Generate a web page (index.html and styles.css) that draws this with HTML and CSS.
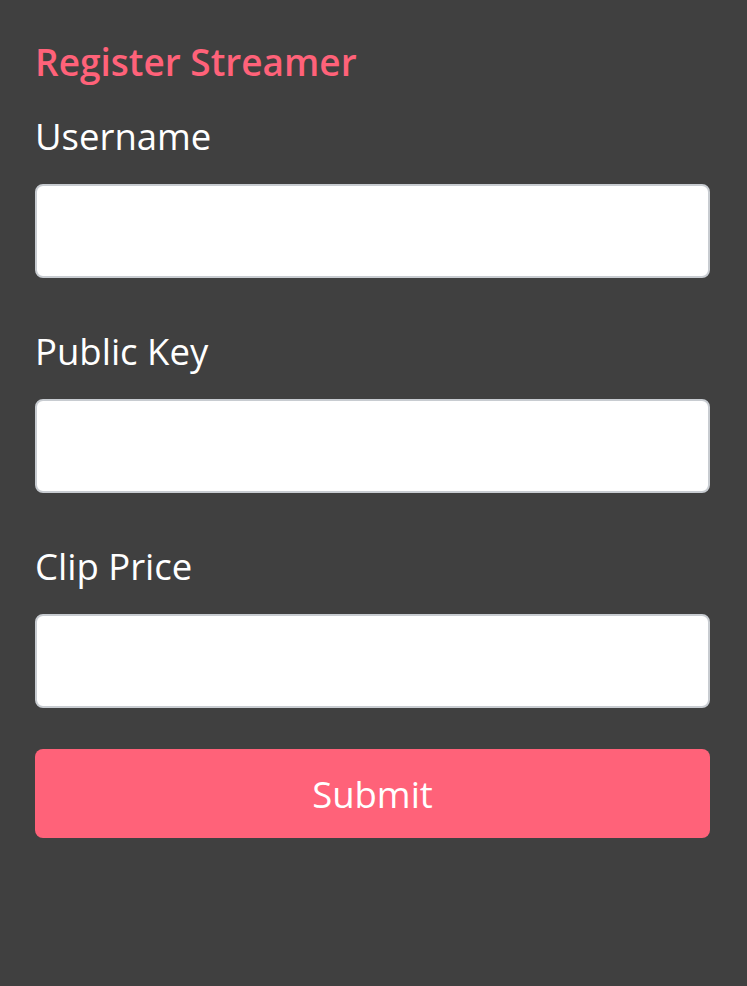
FILE: index.html
```html
<!DOCTYPE html>
<html>
<head>
<meta charset="utf-8">
<link rel="stylesheet" href="styles.css">
</head>
<body>
<form class="form">
  <h1 class="title">Register Streamer</h1>
  <label class="field">
    <span class="label">Username</span>
    <input class="input" type="text">
  </label>
  <label class="field">
    <span class="label">Public Key</span>
    <input class="input" type="text">
  </label>
  <label class="field">
    <span class="label">Clip Price</span>
    <input class="input" type="text">
  </label>
  <button class="submit" type="button">Submit</button>
</form>
</body>
</html>
```
FILE: styles.css
```css
html, body {
  margin: 0;
  padding: 0;
  background: #404040;
  height: 100%;
}
body {
  font-family: "Open Sans", "Noto Sans", sans-serif;
  color: #ffffff;
}
.form {
  display: flex;
  flex-direction: column;
  padding: 37px 37px 0 35px;
}
.title {
  margin: 0;
  font-size: 37px;
  font-weight: 600;
  line-height: 50px;
  color: #ff6279;
}
.field {
  display: flex;
  flex-direction: column;
  margin-top: 24px;
}
.field + .field {
  margin-top: 48px;
}
.label {
  font-size: 36.5px;
  line-height: 50px;
  margin-bottom: 23px;
}
.input {
  box-sizing: border-box;
  height: 94px;
  width: 100%;
  margin: 0;
  border: 2px solid #c8ccd1;
  border-radius: 8px;
  background: #ffffff;
  outline: none;
}
.submit {
  margin-top: 41px;
  height: 89px;
  border: none;
  border-radius: 8px;
  background: #ff6279;
  color: #ffffff;
  font-family: "Open Sans", "Noto Sans", sans-serif;
  font-size: 36.5px;
  padding: 0;
}
```
